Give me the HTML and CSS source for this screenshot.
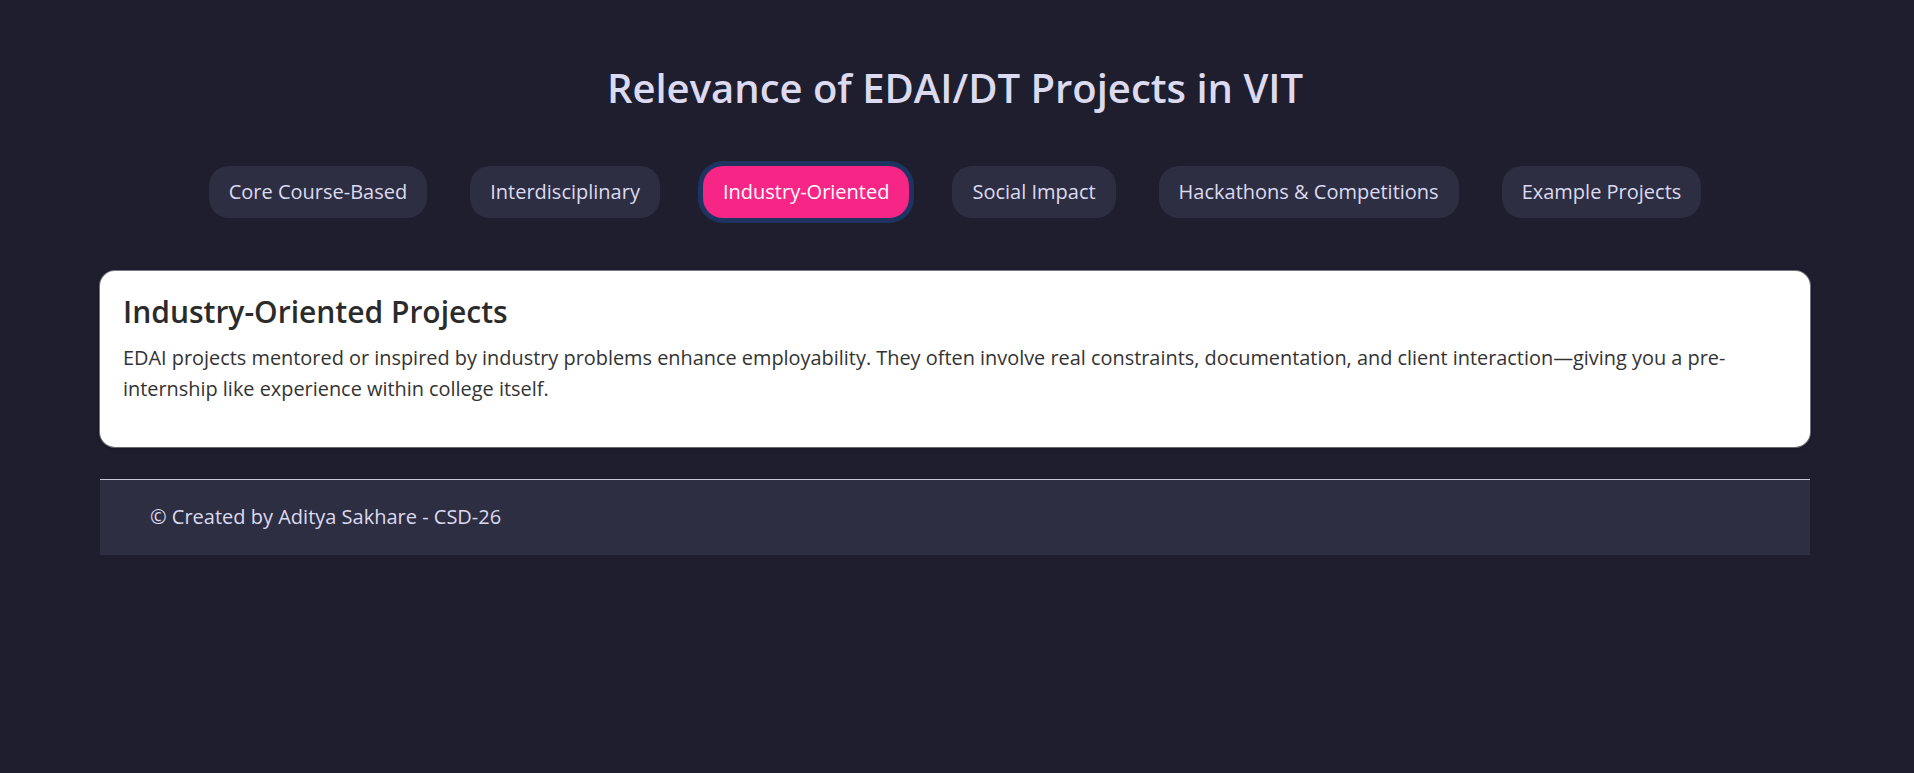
FILE: index.html
```html
<!DOCTYPE html>
<html lang="en">
<head>
<meta charset="utf-8">
<title>Relevance of EDAI/DT Projects in VIT</title>
<link rel="stylesheet" href="styles.css">
</head>
<body>
<div class="page">
  <header class="hero">
    <h1 class="hero-title">Relevance of EDAI/DT Projects in VIT</h1>
  </header>
  <nav class="tabs">
    <button class="tab">Core Course-Based</button>
    <button class="tab">Interdisciplinary</button>
    <button class="tab tab-active">Industry-Oriented</button>
    <button class="tab">Social Impact</button>
    <button class="tab">Hackathons &amp; Competitions</button>
    <button class="tab">Example Projects</button>
  </nav>
  <section class="card">
    <h2 class="card-title">Industry-Oriented Projects</h2>
    <p class="card-text">EDAI projects mentored or inspired by industry problems enhance employability. They often involve real constraints, documentation, and client interaction—giving you a pre-internship like experience within college itself.</p>
  </section>
  <footer class="footer">
    <p class="footer-text">© Created by Aditya Sakhare - CSD-26</p>
  </footer>
</div>
</body>
</html>
```
FILE: styles.css
```css
* { box-sizing: border-box; }

html, body {
  margin: 0;
  padding: 0;
  background: #1e1e2e;
}

body {
  font-family: "Open Sans", "Noto Sans", sans-serif;
  color: #dcdaf0;
  min-height: 773px;
}

.page {
  width: 1710px;
  margin-left: 100px;
}

.hero {
  padding-top: 64px;
  text-align: center;
}

.hero-title {
  margin: 0;
  font-size: 40px;
  line-height: 48px;
  font-weight: 600;
  color: #dcdaf0;
}

.tabs {
  display: flex;
  justify-content: center;
  gap: 43px;
  margin-top: 54px;
}

.tab {
  font-family: inherit;
  font-size: 20px;
  line-height: 26px;
  padding: 13px 20px;
  border: none;
  border-radius: 20px;
  background: #2e2e42;
  color: #dcdaf0;
  cursor: pointer;
}

.tab-active {
  background: #f72585;
  color: #ffffff;
  box-shadow: 0 0 0 5px #1d3461;
}

.card {
  margin-top: 53px;
  background: #ffffff;
  border-radius: 15px;
  padding: 23px;
  box-shadow: 0 1px 4px rgba(0, 0, 0, 0.35), 0 0 0 1px rgba(200, 200, 210, 0.6);
}

.card-title {
  margin: 0 0 12px;
  font-size: 30px;
  line-height: 36px;
  font-weight: 600;
  color: #2b2b2b;
}

.card-text {
  margin: 0 0 20px;
  font-size: 19.9px;
  line-height: 31px;
  color: #333333;
}

.footer {
  margin-top: 32px;
  background: #2e2e42;
  border-top: 1px solid #c8c8d4;
  padding: 22px 50px 23px;
}

.footer-text {
  margin: 0;
  font-size: 20px;
  line-height: 30px;
  color: #dcdaf0;
}
```
